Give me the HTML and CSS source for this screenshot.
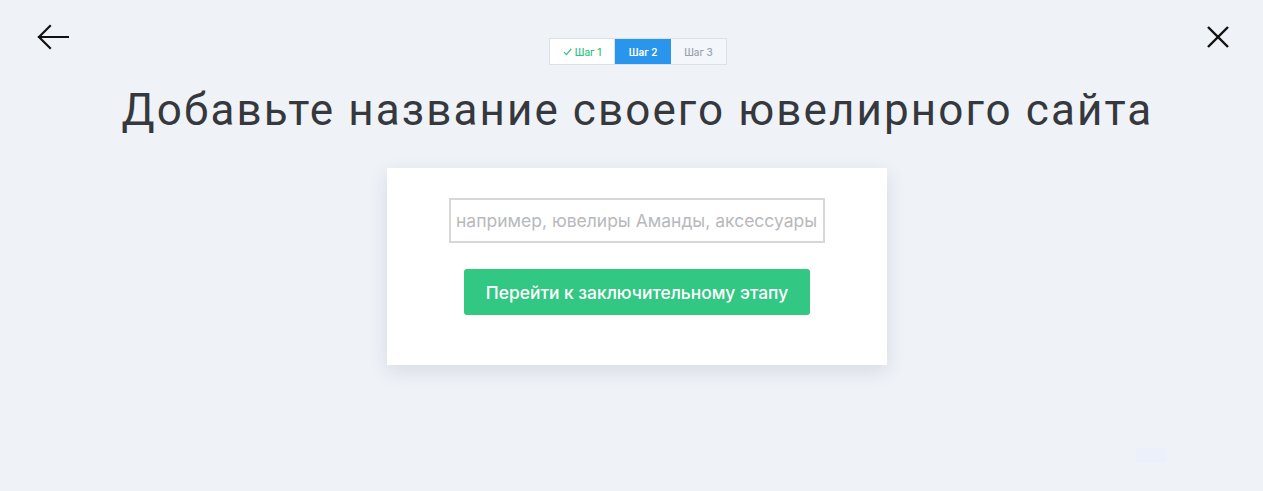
FILE: index.html
```html
<!DOCTYPE html>
<html lang="ru">

<head>
    <meta charset="UTF-8">
    <meta name="viewport" content="width=device-width, initial-scale=1.0">
    <title>Название сайта | Шаг 2</title>
    <link rel="stylesheet" href="styles.css">
</head>

<body>
    <div class="page">
        <div class="top-bar">
            <a class="icon-btn" href="#" aria-label="Назад">
                <svg width="32" height="26" viewBox="0 0 32 26" fill="none" stroke="#111" stroke-width="2.2"
                    stroke-linecap="square">
                    <line x1="2" y1="13" x2="31" y2="13"></line>
                    <polyline points="13,2 2,13 13,24"></polyline>
                </svg>
            </a>
            <div class="steps">
                <div class="step done">
                    <svg width="9" height="8" viewBox="0 0 9 8" fill="none" stroke="currentColor" stroke-width="1.2">
                        <polyline points="1,4.2 3.4,6.6 8.2,1"></polyline>
                    </svg>
                    Шаг 1
                </div>
                <div class="step active">Шаг 2</div>
                <div class="step">Шаг 3</div>
            </div>
            <a class="icon-btn close" href="#" aria-label="Закрыть">
                <svg width="22" height="22" viewBox="0 0 22 22" fill="none" stroke="#111" stroke-width="2.4">
                    <line x1="1" y1="1" x2="21" y2="21"></line>
                    <line x1="21" y1="1" x2="1" y2="21"></line>
                </svg>
            </a>
        </div>

        <h1>Добавьте название своего ювелирного сайта</h1>

        <form class="card" onsubmit="event.preventDefault()">
            <input type="text" placeholder="например, ювелиры Аманды, аксессуары">
            <button type="submit">Перейти к заключительному этапу</button>
        </form>

        <div class="chat-stub"></div>
    </div>
</body>

</html>
```

FILE: styles.css
```css
* {
    margin: 0;
    padding: 0;
    box-sizing: border-box;
    font-family: Inter, Roboto, "Noto Sans", sans-serif;
}

body {
    background-color: #eff2f7;
    min-height: 100vh;
}

.page {
    position: relative;
    height: 491px;
    display: flex;
    flex-direction: column;
    align-items: center;
}

.top-bar {
    width: 100%;
    display: flex;
    justify-content: space-between;
    align-items: flex-start;
    padding: 23px 34px 0 37px;
}

.icon-btn {
    display: block;
    margin-top: 1px;
}

.icon-btn.close {
    margin-top: 3px;
}

.steps {
    display: flex;
    margin-top: 15px;
    border: 1px solid #dbe1ea;
    background-color: #fff;
    height: 27px;
}

.step {
    display: flex;
    align-items: center;
    justify-content: center;
    gap: 3px;
    font-size: 10px;
    font-weight: 500;
    color: #9aa3ad;
    background-color: #f3f6fb;
    width: 55px;
}

.step.done {
    width: 65px;
    color: #2fc47f;
    background-color: #fff;
    border-right: 1px solid #dbe1ea;
}

.step.active {
    width: 56px;
    color: #fff;
    background-color: #2a95ec;
    font-weight: 600;
}

h1 {
    margin-top: 20px;
    margin-left: 12px;
    font-family: Roboto, "Noto Sans", sans-serif;
    font-weight: 400;
    font-size: 44px;
    letter-spacing: 2.1px;
    color: #35383c;
    line-height: 50px;
}

.card {
    margin-top: 33px;
    width: 500px;
    height: 197px;
    background-color: #fff;
    box-shadow: 0 6px 18px rgba(40, 60, 90, 0.12);
    display: flex;
    flex-direction: column;
    align-items: center;
    padding-top: 30px;
    margin-left: 11px;
}

.card input {
    width: 376px;
    height: 45px;
    border: 2px solid #d7d7d7;
    padding: 0 5px;
    font-size: 17.5px;
    color: #333;
    outline: none;
}

.card input::placeholder {
    color: #b7b9bc;
}

.card button {
    margin-top: 26px;
    width: 346px;
    height: 46px;
    border: none;
    border-radius: 3px;
    background-color: #33c784;
    color: #fff;
    font-size: 17.4px;
    font-weight: 500;
    cursor: pointer;
}

.card button:hover {
    background-color: #2bb574;
}

.chat-stub {
    position: absolute;
    right: 96px;
    bottom: 28px;
    width: 31px;
    height: 15px;
    border-radius: 3px;
    background-color: #ebf0fb;
}
```
